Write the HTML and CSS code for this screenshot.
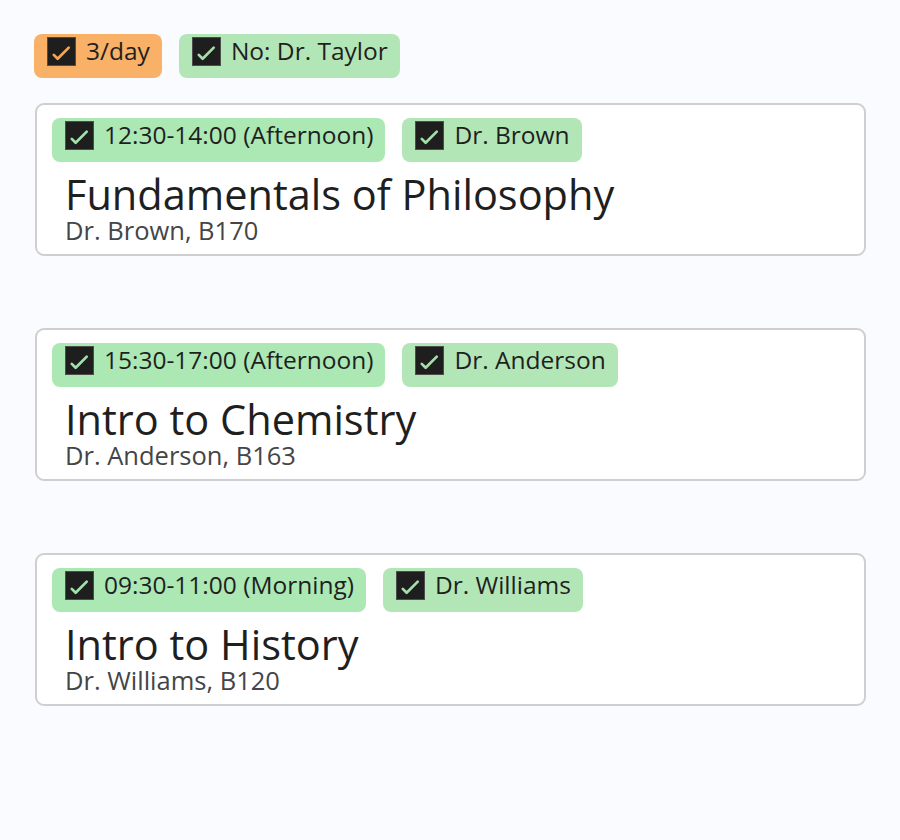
FILE: index.html
```html
<!DOCTYPE html>
<html>
<head>
<meta charset="utf-8">
<link rel="stylesheet" href="styles.css">
</head>
<body>
<div class="page">
  <div class="tags filters">
    <span class="tag tag-orange"><span class="box"><svg viewBox="0 0 28 28"><path d="M6 17.5l4 4 11.5-11.5" /></svg></span>3/day</span>
    <span class="tag tag-green"><span class="box"><svg viewBox="0 0 28 28"><path d="M6 17.5l4 4 11.5-11.5" /></svg></span>No: Dr. Taylor</span>
  </div>

  <div class="card">
    <div class="tags">
      <span class="tag tag-time"><span class="box"><svg viewBox="0 0 28 28"><path d="M6 17.5l4 4 11.5-11.5" /></svg></span>12:30-14:00 (Afternoon)</span>
      <span class="tag tag-green"><span class="box"><svg viewBox="0 0 28 28"><path d="M6 17.5l4 4 11.5-11.5" /></svg></span>Dr. Brown</span>
    </div>
    <div class="title">Fundamentals of Philosophy</div>
    <div class="sub">Dr. Brown, B170</div>
  </div>

  <div class="card">
    <div class="tags">
      <span class="tag tag-time"><span class="box"><svg viewBox="0 0 28 28"><path d="M6 17.5l4 4 11.5-11.5" /></svg></span>15:30-17:00 (Afternoon)</span>
      <span class="tag tag-green"><span class="box"><svg viewBox="0 0 28 28"><path d="M6 17.5l4 4 11.5-11.5" /></svg></span>Dr. Anderson</span>
    </div>
    <div class="title">Intro to Chemistry</div>
    <div class="sub">Dr. Anderson, B163</div>
  </div>

  <div class="card">
    <div class="tags">
      <span class="tag tag-time"><span class="box"><svg viewBox="0 0 28 28"><path d="M6 17.5l4 4 11.5-11.5" /></svg></span>09:30-11:00 (Morning)</span>
      <span class="tag tag-green"><span class="box"><svg viewBox="0 0 28 28"><path d="M6 17.5l4 4 11.5-11.5" /></svg></span>Dr. Williams</span>
    </div>
    <div class="title">Intro to History</div>
    <div class="sub">Dr. Williams, B120</div>
  </div>
</div>
</body>
</html>
```

FILE: styles.css
```css
html, body {
  margin: 0;
  padding: 0;
  background: #fafbff;
}
body {
  font-family: "Open Sans", "Noto Sans", sans-serif;
  color: #1f1f1f;
}
.page {
  padding: 34px 34px 0 35px;
}
.tags {
  display: flex;
  gap: 17px;
}
.filters {
  margin-bottom: 25px;
  margin-left: -1px;
}
.tag {
  display: inline-flex;
  align-items: flex-start;
  gap: 10px;
  height: 44px;
  padding: 3px 12px 0 13px;
  border-radius: 8px;
  font-size: 24.5px;
  line-height: 28px;
  white-space: nowrap;
  box-sizing: border-box;
}
.tag-orange { background: #f8b166; --chk: #f5a653; }
.tag-green { background: #b3e6b7; --chk: #a4dea9; }
.tag-time { background: #abe8b4; --chk: #a0e3aa; }
.box {
  flex: none;
  width: 29px;
  height: 29px;
  box-sizing: border-box;
  background: #1e1e1e;
  border: 1px solid #4d4d4d;
  position: relative;
}
.box svg {
  display: block;
  width: 27px;
  height: 27px;
}
.box svg path {
  fill: none;
  stroke: var(--chk);
  stroke-width: 2.8;
  stroke-linecap: round;
  stroke-linejoin: round;
}
.card {
  background: #fff;
  border: 2px solid #cfcfcf;
  border-radius: 9px;
  padding: 13px 15px 11px 15px;
  margin-bottom: 72px;
  width: 831px;
  box-sizing: border-box;
}
.title {
  margin-left: 13px;
  margin-top: 9px;
  font-size: 41.5px;
  line-height: 46px;
}
.sub {
  margin-left: 13px;
  font-size: 25.5px;
  line-height: 26px;
  color: #454545;
}
```
